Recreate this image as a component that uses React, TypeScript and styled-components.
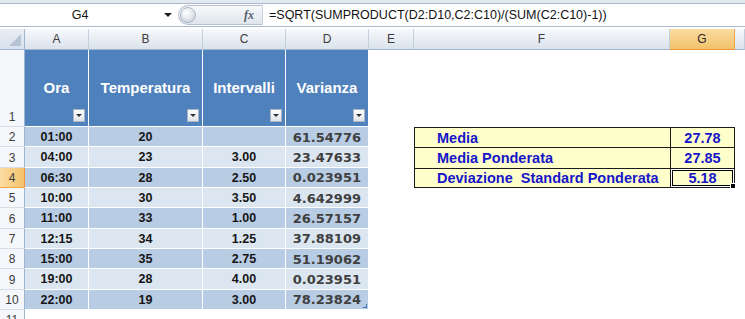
import styled, { createGlobalStyle } from "styled-components";

const GlobalStyle = createGlobalStyle`
  html, body {
    margin: 0;
    padding: 0;
    background: #fff;
  }
  body {
    font-family: "Liberation Sans", Arial, sans-serif;
  }
`;

const Window = styled.div`
  width: 745px;
  height: 319px;
  overflow: hidden;
  background: #fff;
  display: flex;
  flex-direction: column;
`;

// formula bar
const TopStrip = styled.div`
  padding-top: 3px;
  background: #e3e9f1;
`;
const FormulaBar = styled.div`
  height: 22px;
  display: flex;
  align-items: center;
  background: #fff;
  border-top: 1px solid #a9b9ce;
  border-bottom: 1px solid #a9b9ce;
`;
const NameBox = styled.div`
  width: 160px;
  text-align: center;
  font-size: 12.5px;
  color: #1a1a1a;
`;
const DropArrow = styled.div`
  width: 16px;
  display: flex;
  justify-content: center;
  &::after {
    content: "";
    border-left: 4px solid transparent;
    border-right: 4px solid transparent;
    border-top: 4px solid #222;
  }
`;
const Pill = styled.div`
  margin-left: 2px;
  width: 85px;
  height: 20px;
  box-sizing: border-box;
  display: flex;
  align-items: center;
  border: 1px solid #b4c0cf;
  border-right-color: #c9d2dd;
  border-radius: 10px 0 0 10px;
  background: linear-gradient(#f7f9fb, #dfe5ec);
`;
const Knob = styled.div`
  width: 16px;
  height: 16px;
  margin-left: 1px;
  border-radius: 50%;
  box-sizing: border-box;
  border: 1px solid #aab6c5;
  background: radial-gradient(circle at 40% 35%, #ffffff 0%, #e6eaef 45%, #bcc6d2 100%);
`;
const Fx = styled.span`
  margin-left: auto;
  margin-right: 8px;
  font-family: "Liberation Serif", "Times New Roman", serif;
  font-style: italic;
  font-weight: bold;
  font-size: 12px;
  color: #55606e;
`;
const FormulaText = styled.div`
  padding-left: 6px;
  font-size: 12.5px;
  color: #111;
  white-space: nowrap;
`;

// sheet grid
const Sheet = styled.div`
  margin-top: 2px;
  display: grid;
  grid-template-columns: 25px 64px 114px 83px 83px 45px 256px 65px 1fr;
  grid-template-rows: 21px 77px repeat(9, 20.33px) 20px;
`;

const Corner = styled.div`
  box-sizing: border-box;
  position: relative;
  background: linear-gradient(#e9eef5, #d7e0eb);
  border-right: 1px solid #9eb6ce;
  border-bottom: 1px solid #9eb6ce;
  &::after {
    content: "";
    position: absolute;
    right: 3px;
    bottom: 3px;
    border-left: 12px solid transparent;
    border-bottom: 12px solid #b5c3d4;
  }
`;

const ColHead = styled.div<{ $active?: boolean }>`
  box-sizing: border-box;
  display: flex;
  align-items: center;
  justify-content: center;
  font-size: 12px;
  color: ${(p) => (p.$active ? "#2a2a2a" : "#3b3b3b")};
  background: ${(p) =>
    p.$active
      ? "linear-gradient(#fbdca3, #f3c26b)"
      : "linear-gradient(#f7f9fc, #dae2ec)"};
  border-right: 1px solid ${(p) => (p.$active ? "#f2a64b" : "#c3cfdd")};
  border-bottom: 1px solid ${(p) => (p.$active ? "#f29536" : "#9eb6ce")};
`;

const RowHead = styled.div<{ $active?: boolean }>`
  box-sizing: border-box;
  display: flex;
  align-items: flex-end;
  justify-content: center;
  padding-bottom: 2px;
  font-size: 12px;
  color: #3b3b3b;
  background: ${(p) =>
    p.$active ? "linear-gradient(90deg, #fbdca3, #f3c26b)" : "#f5f7fa"};
  border-right: 1px solid ${(p) => (p.$active ? "#f29536" : "#9eb6ce")};
  border-bottom: 1px solid ${(p) => (p.$active ? "#f2a64b" : "#d5dde8")};
`;

type Tone = "head" | "band1" | "band2" | "plain";
const toneBg: Record<Tone, string> = {
  head: "#4f81bd",
  band1: "#b8cce4",
  band2: "#dce6f1",
  plain: "#fff",
};

const Cell = styled.div<{ $tone: Tone; $align?: "center" | "right"; $num?: boolean }>`
  box-sizing: border-box;
  position: relative;
  display: flex;
  align-items: center;
  justify-content: ${(p) => (p.$align === "right" ? "flex-end" : "center")};
  padding-right: ${(p) => (p.$align === "right" ? "7px" : "0")};
  padding-top: 1px;
  background: ${(p) => toneBg[p.$tone]};
  border-right: ${(p) => (p.$tone === "plain" ? "none" : "1px solid #fff")};
  border-bottom: ${(p) => (p.$tone === "plain" ? "none" : "1px solid #fff")};
  font-weight: bold;
  font-family: ${(p) =>
    p.$num ? '"DejaVu Sans", Verdana, sans-serif' : '"Liberation Sans", Arial, sans-serif'};
  font-size: ${(p) => (p.$num ? "13px" : "12.5px")};
  color: ${(p) => (p.$num ? "#404040" : "#151515")};
  white-space: nowrap;
`;

const HeadCell = styled(Cell)`
  color: #fff;
  font-family: "Liberation Sans", Arial, sans-serif;
  font-size: 15px;
  padding-top: 0;
  padding-bottom: 2px;
`;

const FilterButton = styled.span`
  position: absolute;
  right: 3px;
  bottom: 4px;
  width: 12px;
  height: 13px;
  box-sizing: border-box;
  border: 1px solid #a7b3c2;
  background: linear-gradient(#fdfdfe, #dfe4ea);
  display: flex;
  align-items: center;
  justify-content: center;
  &::after {
    content: "";
    border-left: 3px solid transparent;
    border-right: 3px solid transparent;
    border-top: 3px solid #333;
  }
`;

const ResizeMark = styled.span`
  position: absolute;
  right: 1px;
  bottom: 1px;
  width: 3px;
  height: 3px;
  border-right: 1px solid #3a6eb5;
  border-bottom: 1px solid #3a6eb5;
`;

const NoteCell = styled.div<{ $last?: boolean; $value?: boolean; $selected?: boolean }>`
  box-sizing: border-box;
  position: relative;
  display: flex;
  align-items: center;
  justify-content: ${(p) => (p.$value ? "center" : "flex-start")};
  padding-left: ${(p) => (p.$value ? "0" : "22px")};
  padding-top: 1px;
  background: #ffffcc;
  border-top: 1px solid #1a1a1a;
  border-left: 1px solid #1a1a1a;
  border-right: ${(p) => (p.$value ? "1px solid #1a1a1a" : "none")};
  border-bottom: ${(p) => (p.$last ? "1px solid #1a1a1a" : "none")};
  box-shadow: ${(p) =>
    p.$selected ? "inset 0 0 0 1px #fff, inset 0 0 0 2px #000" : "none"};
  font-weight: bold;
  font-size: 14.5px;
  color: #1616c8;
  white-space: pre;
`;

const FillHandle = styled.span`
  position: absolute;
  right: -3px;
  bottom: -3px;
  width: 5px;
  height: 5px;
  background: #000;
  border: 1px solid #fff;
`;

const columns = ["A", "B", "C", "D", "E", "F", "G", ""];
const headers = ["Ora", "Temperatura", "Intervalli", "Varianza"];

const rows = [
  ["01:00", "20", "", "61.54776"],
  ["04:00", "23", "3.00", "23.47633"],
  ["06:30", "28", "2.50", "0.023951"],
  ["10:00", "30", "3.50", "4.642999"],
  ["11:00", "33", "1.00", "26.57157"],
  ["12:15", "34", "1.25", "37.88109"],
  ["15:00", "35", "2.75", "51.19062"],
  ["19:00", "28", "4.00", "0.023951"],
  ["22:00", "19", "3.00", "78.23824"],
];

const summary = [
  ["Media", "27.78"],
  ["Media Ponderata", "27.85"],
  ["Deviazione  Standard Ponderata", "5.18"],
];

function App() {
  return (
    <Window>
      <GlobalStyle />
      <TopStrip>
        <FormulaBar>
          <NameBox>G4</NameBox>
          <DropArrow />
          <Pill>
            <Knob />
            <Fx>fx</Fx>
          </Pill>
          <FormulaText>=SQRT(SUMPRODUCT(D2:D10,C2:C10)/(SUM(C2:C10)-1))</FormulaText>
        </FormulaBar>
      </TopStrip>
      <Sheet>
        <Corner />
        {columns.map((c, i) => (
          <ColHead key={i} $active={c === "G"}>
            {c}
          </ColHead>
        ))}

        <RowHead>1</RowHead>
        {headers.map((h) => (
          <HeadCell key={h} $tone="head">
            {h}
            <FilterButton />
          </HeadCell>
        ))}
        <Cell $tone="plain" />
        <Cell $tone="plain" />
        <Cell $tone="plain" />
        <Cell $tone="plain" />

        {rows.map((r, i) => {
          const tone: Tone = i % 2 === 0 ? "band1" : "band2";
          const note = summary[i];
          return [
            <RowHead key={`h${i}`} $active={i === 2}>
              {i + 2}
            </RowHead>,
            <Cell key={`a${i}`} $tone={tone}>{r[0]}</Cell>,
            <Cell key={`b${i}`} $tone={tone}>{r[1]}</Cell>,
            <Cell key={`c${i}`} $tone={tone}>{r[2]}</Cell>,
            <Cell key={`d${i}`} $tone={tone} $align="right" $num>
              {r[3]}
              {i === rows.length - 1 && <ResizeMark />}
            </Cell>,
            <Cell key={`e${i}`} $tone="plain" />,
            note ? (
              <NoteCell key={`f${i}`} $last={i === 2}>
                {note[0]}
              </NoteCell>
            ) : (
              <Cell key={`f${i}`} $tone="plain" />
            ),
            note ? (
              <NoteCell key={`g${i}`} $value $last={i === 2} $selected={i === 2}>
                {note[1]}
                {i === 2 && <FillHandle />}
              </NoteCell>
            ) : (
              <Cell key={`g${i}`} $tone="plain" />
            ),
            <Cell key={`x${i}`} $tone="plain" />,
          ];
        })}

        <RowHead>11</RowHead>
      </Sheet>
    </Window>
  );
}

export default App;
